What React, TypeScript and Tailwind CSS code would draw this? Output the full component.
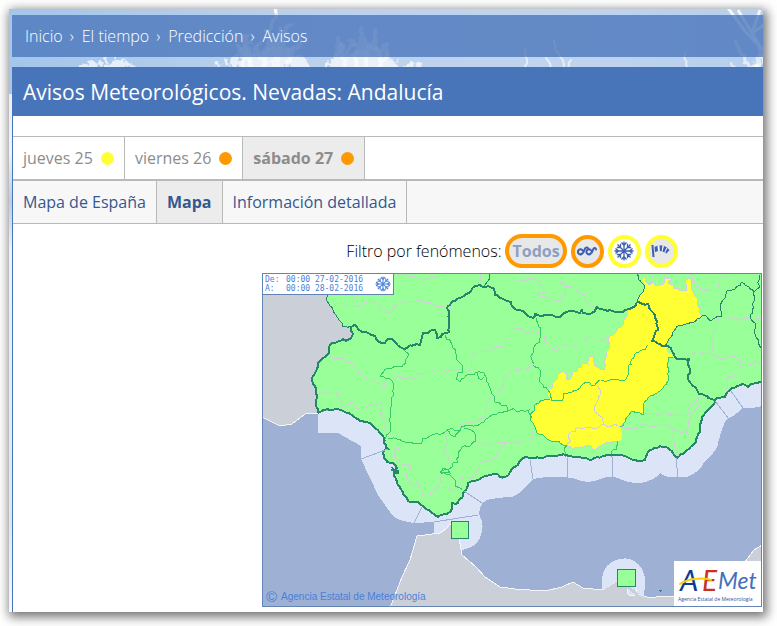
import React from 'react';

type Point = [number, number];

const parse = (s: string): Point[] => s.trim().split(/\s+/).map(p => p.split(',').map(Number) as Point);

const noise = (x: number, y: number) => {
  const n = Math.sin(x * 12.9898 + y * 78.233) * 43758.5453;
  return (n - Math.floor(n)) * 2 - 1;
};

// Midpoint displacement. Depends only on the end points, so neighbouring regions share their edge.
const subdivide = (a: Point, b: Point, amp: number): Point[] => {
  const len = Math.hypot(b[0] - a[0], b[1] - a[1]);
  if (len < 4) return [b];
  const mx = (a[0] + b[0]) / 2;
  const my = (a[1] + b[1]) / 2;
  const k = Math.min(len * 0.16, 2.4) * amp;
  const m: Point = [mx + noise(mx, my) * k, my + noise(my, mx) * k];
  return [...subdivide(a, m, amp), ...subdivide(m, b, amp)];
};

const trace = (s: string, amp = 1, close = false) => {
  const pts = parse(s);
  if (close) pts.push(pts[0]);
  let out: Point[] = [pts[0]];
  for (let i = 1; i < pts.length; i++) out = out.concat(subdivide(pts[i - 1], pts[i], amp));
  return 'M' + out.map(p => `${p[0].toFixed(1)} ${p[1].toFixed(1)}`).join('L') + (close ? 'Z' : '');
};

const PORTUGAL_BORDER = '330,290 329,304 336,315 343,327 352,326';
const WEST = '352,326 350,339 346,341 343,339 339,341 332,343 329,353 323,358 318,363 316,371 312,380 316,393 318,413';
const SOUTH = '318,413 323,410 343,411 352,415 365,422 374,427 380,433 384,443 388,449 383,452 384,458 387,462 393,463 397,468 394,472 396,480 400,487 408,501 418,502 425,508 438,517 450,512 452,503 458,503 463,493 468,483 480,479 490,475 505,477 513,468 523,458 540,458 547,456 573,457 590,460 603,456 627,457 638,461 645,460 650,450 656,448 668,448 677,458 687,450 697,437 702,417 715,400';
const EAST_COAST = '715,400 725,397 732,388 743,384 748,387 760,382 764,383';
const EAST = '715,400 707,396 699,394 693,386 688,378 689,359 675,357 668,346 660,344 652,341 658,330 655,315 648,304 637,302';
const NORTH = '637,302 630,309 620,312 610,310 597,307 592,313 583,313 582,309 580,313 563,314 556,317 535,314 533,318 525,313 511,302 495,295 493,288 480,285 475,286 460,298 447,308 449,332 437,338 435,330 423,333 420,345 404,349 396,343 392,339 388,339 385,343 378,341 375,336 362,332 355,325 352,326';

const YELLOW = '640,280 645,278 647,283 650,285 653,282 658,286 665,282 664,275 666,278 672,278 668,283 673,285 674,289 677,288 680,291 687,290 686,280 689,278 692,290 697,298 699,312 702,316 694,322 683,325 673,332 666,345 673,357 668,358 668,378 663,388 647,400 643,415 632,411 620,427 622,437 617,442 604,444 598,447 594,450 591,446 587,445 567,446 553,442 537,433 530,418 535,405 550,399 548,392 552,388 553,383 558,378 558,374 563,371 566,374 567,380 570,379 573,372 577,371 578,367 581,368 583,363 588,364 590,356 594,357 595,366 600,369 604,370 604,362 606,357 606,352 610,345 608,337 616,332 618,328 623,325 627,310 637,302 643,292 645,285';

const SEA_BELT = 'M318 413V433H338L361 446V459L370 478L378 495L392 515Q398 521 414 523L434 522V534H446L462 550Q474 547 477 543Q487 528 479 514Q480 505 484 502Q488 498 512 497Q522 493 533 479Q548 476 563 477L573 478Q588 485 600 479Q612 474 622 480Q640 486 650 480Q655 479 660 473Q666 479 687 477Q700 472 704 462Q718 450 718 443Q724 421 728 418Q732 418 743 408Q752 409 762 406V375H690L650 430L530 440L440 480L370 400Z';

const AFRICA = 'M390 608L402 577L410 560L417 536L440 533L446 529L450 524L457 526L462 555L476 567L485 577L500 587L515 589L545 591L562 587L573 582L583 588L602 590L617 581L628 587L638 594L650 598L663 596L673 597L745 562L754 550L762 545V608Z';

const PROVINCES = [
  '404,349 409,354 406,363 395,366 386,369 380,376 389,378 394,394 390,410 391,424 388,449',
  '445,335 452,345 456,356 462,365 463,372 457,374 456,379 460,382 472,375 484,373 489,386 495,402 505,405 508,411 520,411 529,410 532,418',
  '388,439 405,442 421,444 423,438 438,434 447,430 452,428 460,431 468,425 480,424 488,418 500,412 508,411',
  '536,318 541,334 534,347 533,365 540,370 539,378 550,395 551,400',
  '551,400 562,401 568,393 580,388 587,382 594,386 610,380 622,381 628,372 632,359 640,351 648,345',
  '440,472 449,469 458,462 462,447 470,446 476,441 474,432 464,429',
  '440,472 450,475 455,480 462,490',
  '440,472 443,468 450,473 441,474',
  '447,430 450,434 455,437 460,431',
  '477,373 481,380 484,377',
  '567,446 566,457', '618,441 617,449 611,452 612,457',
  '620,427 632,411 643,415 647,400',
];

const PROVINCES_DARK = [
  '490,273 488,281 484,286',
  '637,273 638,279 644,285 643,292 637,302',
  '666,345 673,332 683,325 694,322 702,316 706,316 711,321 721,317 723,300 727,291 735,289 742,282 749,287 754,292 753,303 750,316 756,324 756,337 761,348',
  '754,292 760,287 759,275',
];

const ZONES = [
  '336,303 350,305 364,303 378,304 391,313 397,304 412,302 425,303 436,306 450,305 447,315',
  '352,302 356,292 378,295', '393,279 410,276 420,282 430,277 442,278',
  '481,273 480,282', '514,282 528,278 540,284 546,292 537,294 552,299 561,300 566,289 560,281 572,287 585,295 594,307',
  '328,354 345,358 355,364 360,374 375,382 384,387 386,378 400,376 414,379 428,371 437,371 452,369 472,370',
  '318,395 330,393 340,397 342,407 352,400 360,408 370,405 382,402 384,420 388,438',
  '472,367 473,355 490,351 506,347 510,332 519,328 526,333 540,333',
  '533,367 519,370 507,374 503,386 492,397 485,405 484,418 473,423 460,428',
  '545,335 547,347 555,351 560,345 575,347 583,341 594,338 608,336',
  '404,443 394,450 395,458 412,468 406,478 418,483 427,498 440,484 442,472',
  '448,431 443,450 448,461', '478,442 495,443 508,441 530,442 534,434 532,428',
  '508,441 500,448 497,456 482,461 475,476 460,478',
  '442,487 457,489 461,484',
  '567,446 569,434 578,427 597,428 603,424 618,426 650,426 677,431 688,434 689,420 698,404',
  '603,424 602,417 594,409 598,400 597,386',
  '643,415 657,415 665,411 675,416 689,414 697,400 705,395',
  '689,358 700,352 708,353 714,342 716,324 718,318',
  '689,273 696,286 706,291 718,289 719,278 729,275', '728,318 740,321 755,319 762,320',
  '708,353 720,358 735,357 741,361 750,365 757,361 762,364',
  '741,361 738,373 726,378 726,391', '672,435 675,447 677,457',
  '650,285 652,277 660,276',
];

const SEA_LIMITS = 'M361 459L388 449M414 523L422 507M434 522L478 515M482 503L464 491M533 479L530 460M567 478V458M612 477V457M678 478L676 458M729 419L715 401M743 408L731 391';

const YELLOW_EDGE = [
  '548,392 552,388 553,383 558,378 558,374 563,371 566,374 567,380 570,379 573,372 577,371 578,367 581,368 583,363 588,364 590,356 594,357 595,366 600,369 604,370 604,362 606,357 606,352 610,345 608,337 616,332 618,328 623,325 627,310',
  '645,278 647,283 650,285 653,282 658,286 665,282 664,275 666,278 672,278 668,283 673,285 674,289 677,288 680,291 687,290 686,280 689,278 692,290 697,298 699,312 702,316',
  '617,442 604,444 598,447 594,450 591,446 587,445 567,446',
];

const Snowflake: React.FC<{ className?: string }> = ({ className }) => (
  <svg viewBox="0 0 20 20" className={className} fill="none" stroke="currentColor" strokeWidth="1.3">
    {[0, 90, 180, 270].map(a => (
      <path key={a} transform={`rotate(${a} 10 10)`} d="M10 10V0.500M7.500 1.500L10 4.500L12.500 1.500M10 10L16.500 3.500M13.500 2.800V6.500H17.200" />
    ))}
  </svg>
);

const Waves = () => (
  <svg viewBox="0 0 20 12" className="w-5 h-3" fill="none" stroke="#3d5fae" strokeWidth="2" strokeLinecap="round" strokeLinejoin="round">
    <path d="M5.500 5.500C3.500 2.500 0 5.500 1.300 8C3 11 6.500 8.500 7.200 5.500C8 2.500 9.800 1.800 11 3.200" />
    <path d="M14 5.500C12 2.500 8.500 5.500 9.800 8C11.500 11 15 8.500 15.700 5.500C16.500 2.500 18.500 2.200 19 4.500" />
  </svg>
);

const Windsock = () => (
  <svg viewBox="0 0 20 14" className="w-5 h-[14px]" fill="none">
    <path d="M1.500 1L2.500 13" stroke="#3d5fae" strokeWidth="2" />
    <path d="M3 3C7 1 12 1 15 3C18 5 19 7 18.500 9.500H14.500C13 6.500 8 6 3.500 8Z" fill="#fff" stroke="#c8ccd6" strokeWidth=".5" />
    <path d="M3.500 3L6.500 1.800L7 7L4 8ZM8.500 1.500L11.500 1.600L10.700 7.200L8.800 7ZM13 1.900L15.800 3.300L13.200 8.400L11.500 7.200ZM16.500 4L18.500 6.200L15.500 9.500L14.200 8.600Z" fill="#3d5fae" />
  </svg>
);

// x, height, lean, width
const BRANCHES = [
  [244, 35, 4, 3], [252, 34, -7, 4], [263, 32, 5, 5], [272, 60, 4, 3], [278, 45, 13, 4], [288, 29, 13, 4],
  [344, 32, -6, 4], [357, 42, 4, 4], [367, 40, 8, 4], [378, 26, 9, 4],
  [528, 21, -3, 2], [552, 12, -6, 2], [562, 30, -8, 2], [568, 10, 3, 2],
  [687, 17, -2, 2], [736, 7, -5, 2], [748, 29, -12, 3], [757, 22, 3, 5],
];

const FROST_TUFTS = [
  '80,70 83,61 88,66 92,60 98,64 101,60 104,65 107,57 111,64 115,56 119,60 126,58 124,63 132,62 127,67 136,70',
  '216,70 214,62 220,66 224,58 229,64 232,56 237,61 240,50 244,58 247,46 251,55 256,48 261,56 267,47 272,52 279,42 283,54 291,47 292,57 300,54 298,61 308,60 303,66 312,70',
  '322,70 327,60 331,64 337,52 342,56 345,44 350,54 355,42 361,52 368,42 371,54 379,46 382,57 390,54 388,60 400,59 394,64 404,66 410,61 423,64 412,68 425,70',
  '750,70 753,61 758,64 760,57 766,56 766,70',
];

const FrostBackdrop = () => (
  <svg width="768" height="603" viewBox="9 9 768 603" className="absolute top-0 left-0" aria-hidden="true">
    <defs>
      <linearGradient id="sky" x1="0" x2="1" y1="0" y2="0">
        <stop offset="0" stopColor="#a3c6eb" />
        <stop offset=".35" stopColor="#b9d0ed" />
        <stop offset=".7" stopColor="#c0d4ef" />
        <stop offset="1" stopColor="#b5cfee" />
      </linearGradient>
      <linearGradient id="frost" x1="0" x2="0" y1="0" y2="1">
        <stop offset="0" stopColor="#a3c6eb" />
        <stop offset=".13" stopColor="#e9eff8" />
        <stop offset=".24" stopColor="#edf2fb" />
        <stop offset=".32" stopColor="#b9cdea" />
        <stop offset=".4" stopColor="#edf2fa" />
        <stop offset=".85" stopColor="#dce7f5" />
        <stop offset="1" stopColor="#f5f8fc" />
      </linearGradient>
    </defs>
    <rect x="9" y="9" width="768" height="603" fill="url(#frost)" />
    <rect x="9" y="9" width="768" height="85" fill="url(#sky)" />
    <g fill="#fff" opacity=".7">
      {FROST_TUFTS.map(t => <path key={t} d={trace(t, 3, true)} />)}
    </g>
    <g fill="none" stroke="#fff" strokeLinecap="round" opacity=".6">
      {BRANCHES.map(([x, h, lean, w]) => (
        <g key={x} strokeWidth={w}>
          <path d={trace(`${x},70 ${x + lean * 0.3},${70 - h * 0.5} ${x + lean},${70 - h}`, 1.5)} />
          {x < 400 && <path d={trace(`${x - 7},${66 - h * 0.6} ${x + lean * 0.3},${70 - h * 0.4} ${x + 8},${64 - h * 0.6}`, 2)} />}
        </g>
      ))}
    </g>
    <path d="M275 9L276 13M728 8L745 31L765 52M738 10L760 46M752 33L768 22M760 10L752 33" fill="none" stroke="#fff" strokeWidth="3" opacity=".8" />
  </svg>
);

const AemetLogo = () => (
  <svg viewBox="0 0 87 45" className="absolute right-0 bottom-0 w-[87px] h-[45px]" role="img" aria-label="AEMet">
    <rect width="87" height="45" fill="#fff" />
    <text x="6" y="30" fontSize="29" fill="#0b3a94" className="font-['Lato'] italic">A</text>
    <text x="28" y="30" fontSize="28" fill="#c8321f" className="font-['Lato'] italic">E</text>
    <path d="M6 23C13 18 26 16 37 19" fill="none" stroke="#f9cf0b" strokeWidth="2" strokeLinecap="round" />
    <text x="44" y="28" fontSize="23" fill="#4170bd" className="font-['Lato'] italic">Met</text>
    <text x="4" y="40" fontSize="5" fill="#2b52a0" className="font-['Open_Sans']">Agencia Estatal de Meteorología</text>
  </svg>
);

const WarningMap = () => (
  <div className="relative border border-[#6484b5] overflow-hidden">
    <svg viewBox="263 274 498 332" className="block w-full" shapeRendering="crispEdges" role="img" aria-label="Mapa de avisos de Andalucía">
      <rect x="262" y="273" width="500" height="334" fill="#9fb0d5" />
      <path d="M262 273H380L375 350L318 413L305 414L292 424L280 426L272 422L262 417Z" fill="#cbd0d8" />
      <path d="M262 417L272 422L280 426L292 424L305 414L318 413" fill="none" stroke="#f3f5f8" />
      <path d={SEA_BELT} fill="#dce5f8" />
      <path d={AFRICA} fill="#cbd0d8" stroke="#f3f5f8" />
      <path d="M602 590Q599 563 620 559Q634 556 642 569Q648 579 643 597L628 588L617 581Z" fill="#dce5f8" />
      <circle cx="632" cy="591" r="5" fill="#dce5f8" stroke="#f3f5f8" />
      <path d="M628 587l10 8" stroke="#cbd0d8" strokeWidth="3" />

      <path d={trace(`${PORTUGAL_BORDER} ${WEST} ${SOUTH} ${EAST_COAST} 764,270 326,270`, 1, true)} fill="#99ff99" />
      <path d={trace(YELLOW, 1, true)} fill="#ffff33" />

      <g fill="none" stroke="#cdd3d2">
        {ZONES.map(z => <path key={z} d={trace(z, 1.4)} />)}
        {YELLOW_EDGE.map(z => <path key={z} d={trace(z)} />)}
      </g>
      <g fill="none" stroke="#33cc66">
        {PROVINCES.map(p => <path key={p} d={trace(p, 1.3)} />)}
        <path d={trace('567,446 553,442 537,433 530,418 535,405 550,399')} />
        <path d={trace('673,357 668,358 668,378 663,388 647,400')} />
      </g>
      <g fill="none" stroke="#26866a">
        {PROVINCES_DARK.map(p => <path key={p} d={trace(p)} />)}
        <path d={trace(PORTUGAL_BORDER)} />
      </g>
      <g fill="none" stroke="#26866a" strokeWidth="2">
        <path d={trace(EAST_COAST)} />
        <path d={trace(WEST)} />
        <path d={trace(SOUTH)} />
        <path d={trace(EAST)} />
        <path d={trace(NORTH)} />
        <path d="M391 470l8 1M393 473h6M392 467l4 7" />
      </g>
      <path d={SEA_LIMITS} fill="none" stroke="#9fb0d5" />

      {/* Ceuta and Melilla */}
      <rect x="451.500" y="521.500" width="17" height="17" fill="#99ff99" stroke="#26866a" />
      <rect x="617.500" y="569.500" width="18" height="17" fill="#99ff99" stroke="#26866a" />
      <path d="M659 590h3l-1.500 2Z" fill="#26866a" />
    </svg>

    <div className="absolute top-0 left-0 flex items-center justify-between w-[131px] h-[21px] px-[2px] bg-white border-r border-b border-[#6484b5] text-[#4a80d8]">
      <div className="grid grid-cols-[21px_auto] leading-[9px] text-[8px] font-['DejaVu_Sans_Mono',monospace]">
        <span>De:</span><span>00:00 27-02-2016</span>
        <span>A:</span><span>00:00 28-02-2016</span>
      </div>
      <Snowflake className="w-4 h-4" />
    </div>
    <p className="absolute left-[3px] bottom-[3px] flex items-center gap-1 text-[10px] leading-3 text-[#4a80d8] font-['Liberation_Sans',sans-serif]">
      <span className="text-[15px]">©</span>
      <span>Agencia Estatal de Meteorología</span>
    </p>
    <AemetLogo />
  </div>
);

const crumbs = ['Inicio', 'El tiempo', 'Predicción', 'Avisos'];

const days = [
  { label: 'jueves 25', dot: 'bg-[#ffff33]', active: false },
  { label: 'viernes 26', dot: 'bg-[#ff9900]', active: false },
  { label: 'sábado 27', dot: 'bg-[#ff9900]', active: true },
];

const views = [
  { label: 'Mapa de España', active: false },
  { label: 'Mapa', active: true },
  { label: 'Información detallada', active: false },
];

const filters = [
  { label: 'Costeros', style: 'border-[#ff9900] bg-[#e8e8e8]', icon: <Waves /> },
  { label: 'Nevadas', style: 'border-[#ffff33] bg-white', icon: <Snowflake className="w-5 h-5 shrink-0 text-[#3d5fae]" /> },
  { label: 'Vientos', style: 'border-[#ffff33] bg-[#e8e8e8]', icon: <Windsock /> },
];

export default function App() {
  return (
    <div className="bg-white pt-[9px] pr-[14px] pb-[14px] pl-[9px] font-['Open_Sans',sans-serif] text-base leading-6">
      <div className="relative shadow-[2px_3px_10px_2px_rgba(0,0,0,0.55)]">
        <div className="absolute inset-0 overflow-hidden">
          <FrostBackdrop />
        </div>
        <div className="relative pt-[6px] pl-[3px]">
          <nav aria-label="Ruta" className="h-[42px] px-[13px] flex items-center bg-[#4672b8]/75 text-white font-light">
            {crumbs.map((c, i) => (
              <React.Fragment key={c}>
                {i > 0 && <span className="pl-[7px] pr-2">›</span>}
                <a href="#">{c}</a>
              </React.Fragment>
            ))}
          </nav>

          <main className="mt-[10px] bg-white border-l border-[#4874b9]">
            <h1 className="-ml-px h-[49px] pl-[11px] flex items-center bg-[#4874b9] text-white text-[21px]">
              Avisos Meteorológicos. Nevadas: Andalucía
            </h1>

            <div className="mt-5 h-[45px] flex border-t border-b-2 border-[#b9b9b9]">
              {days.map(d => (
                <a key={d.label} href="#"
                  className={`flex items-center gap-2 px-[10px] border-r border-[#b9b9b9] text-[#8c8c8c] ${d.active ? 'bg-[#ececec] font-bold' : ''}`}>
                  {d.label}
                  <span className={`w-[13px] h-[13px] rounded-full ${d.dot}`} />
                </a>
              ))}
            </div>

            <div className="h-[43px] flex bg-[#f7f7f7] border-b border-[#b9b9b9]">
              {views.map(v => (
                <a key={v.label} href="#"
                  className={`flex items-center px-[10px] border-r border-[#b9b9b9] text-[#35588f] ${v.active ? 'bg-[#ececec] font-bold' : ''}`}>
                  {v.label}
                </a>
              ))}
            </div>

            <div className="w-[500px] ml-auto mr-px pt-[10px] pb-[5px]">
              <div className="flex items-center justify-center gap-1 mb-[5px] text-black">
                <span className="font-light">Filtro por fenómenos:</span>
                <button className="h-[34px] px-[3px] rounded-full border-4 border-[#ff9900] bg-[#e8e8e8] text-[#8aa0c4] font-bold flex items-center">Todos</button>
                {filters.map(f => (
                  <button key={f.label} aria-label={f.label}
                    className={`w-[33px] h-[33px] rounded-full border-4 flex items-center justify-center ${f.style}`}>
                    {f.icon}
                  </button>
                ))}
              </div>
              <WarningMap />
            </div>
          </main>
        </div>
      </div>
    </div>
  );
}
